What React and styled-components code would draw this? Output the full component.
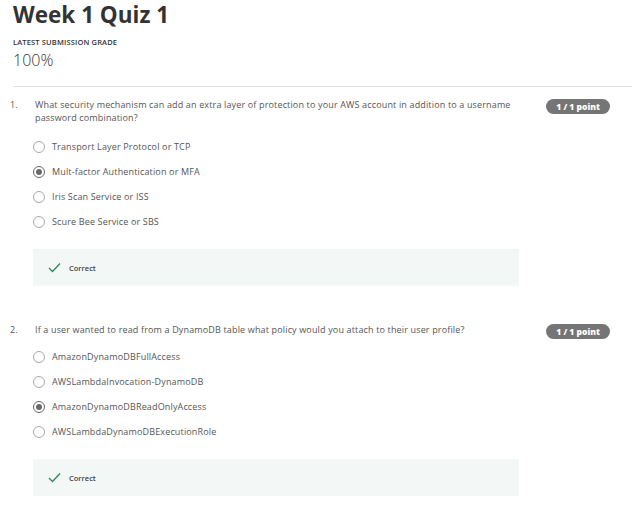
import React from 'react'
import styled, { createGlobalStyle } from 'styled-components'

const GlobalStyle = createGlobalStyle`
  body {
    margin: 0;
    background: #fff;
    font-family: "Open Sans", "Liberation Sans", sans-serif;
    color: #333;
  }
`

const questions = [
  {
    id: 1,
    text: 'What security mechanism can add an extra layer of protection to your AWS account in addition to a username password combination?',
    options: [
      'Transport Layer Protocol or TCP',
      'Mult-factor Authentication or MFA',
      'Iris Scan Service or ISS',
      'Scure Bee Service or SBS',
    ],
    picked: 1,
  },
  {
    id: 2,
    text: 'If a user wanted to read from a DynamoDB table what policy would you attach to their user profile?',
    options: [
      'AmazonDynamoDBFullAccess',
      'AWSLambdaInvocation-DynamoDB',
      'AmazonDynamoDBReadOnlyAccess',
      'AWSLambdaDynamoDBExecutionRole',
    ],
    picked: 2,
  },
]

const Page = styled.div`
  width: 632px;
  height: 518px;
  overflow: hidden;
`

const Header = styled.header`
  margin-left: 13px;
  padding-top: 2px;
  padding-bottom: 16px;
  border-bottom: 1px solid #e1e1e1;
`

const Title = styled.h1`
  margin: 0;
  font-size: 22.5px;
  line-height: 26px;
  font-weight: 700;
  color: #333;
`

const GradeLabel = styled.div`
  margin-top: 9px;
  font-size: 7.5px;
  line-height: 10px;
  letter-spacing: 0.15px;
  font-weight: 600;
  color: #333;
  text-transform: uppercase;
`

const Grade = styled.div`
  margin-top: 3px;
  font-size: 16px;
  line-height: 20px;
  font-weight: 300;
  color: #333;
`

const QuestionBlock = styled.section`
  padding-top: ${p => p.$top}px;
`

const QuestionRow = styled.div`
  display: grid;
  grid-template-columns: 23px 1fr 90px;
  padding-left: 10px;
`

const Num = styled.div`
  font-size: 9px;
  line-height: 13px;
  color: #555;
`

const QText = styled.div`
  font-size: 9px;
  line-height: 13px;
  letter-spacing: 0.15px;
  color: #555;
  padding-left: 2px;
  padding-right: 24px;
`

const Badge = styled.div`
  justify-self: end;
  margin-right: 22px;
  margin-top: 1px;
  width: 64px;
  height: 15px;
  border-radius: 8px;
  background: #757575;
  color: #fff;
  font-size: 8.5px;
  font-weight: 800;
  display: flex;
  align-items: center;
  justify-content: center;
`

const Options = styled.div`
  margin-top: ${p => p.$gap}px;
  padding-left: 33px;
`

const Option = styled.label`
  display: flex;
  align-items: center;
  height: 25px;
  gap: 7px;
  font-size: 9px;
  letter-spacing: 0.15px;
  color: #555;
`

const Radio = styled.span`
  width: 12px;
  height: 12px;
  box-sizing: border-box;
  border-radius: 50%;
  border: 1px solid ${p => (p.$on ? '#666' : '#a8a8a8')};
  display: flex;
  align-items: center;
  justify-content: center;
  &::after {
    content: '';
    width: 6px;
    height: 6px;
    border-radius: 50%;
    background: ${p => (p.$on ? '#6a6a6a' : 'transparent')};
  }
`

const Feedback = styled.div`
  margin: 15px 0 0 33px;
  width: 486px;
  height: 37px;
  background: #f3f8f6;
  display: flex;
  align-items: center;
  padding-left: 15px;
  box-sizing: border-box;
  gap: 8px;
  font-size: 7.5px;
  font-weight: 600;
  color: #444;
`

const Check = () => (
  <svg width="13" height="11" viewBox="0 0 13 11">
    <path d="M1 6 L4.5 9.5 L12 1.5" fill="none" stroke="#2a8a5e" strokeWidth="1.3" />
  </svg>
)

const Question = ({ q, top, gap }) => (
  <QuestionBlock $top={top}>
    <QuestionRow>
      <Num>{q.id}.</Num>
      <QText>{q.text}</QText>
      <Badge>1 / 1 point</Badge>
    </QuestionRow>
    <Options $gap={gap}>
      {q.options.map((o, i) => (
        <Option key={o}>
          <Radio $on={i === q.picked} />
          {o}
        </Option>
      ))}
    </Options>
    <Feedback>
      <Check />
      Correct
    </Feedback>
  </QuestionBlock>
)

const App = () => (
  <Page>
    <GlobalStyle />
    <Header>
      <Title>Week 1 Quiz 1</Title>
      <GradeLabel>Latest Submission Grade</GradeLabel>
      <Grade>100%</Grade>
    </Header>
    <Question q={questions[0]} top={11} gap={10} />
    <Question q={questions[1]} top={37} gap={5} />
  </Page>
)

export default App
